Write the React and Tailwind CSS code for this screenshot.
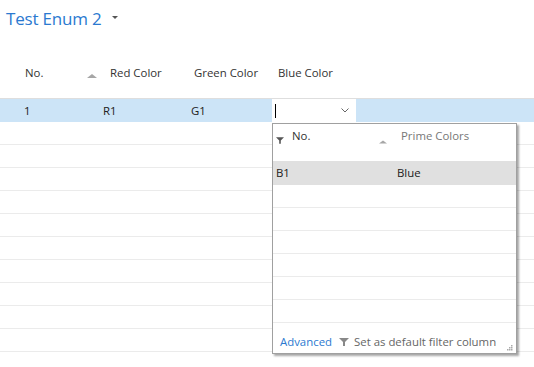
import React from "react";

const font = { fontFamily: '"Open Sans", "Noto Sans", sans-serif' };

function Funnel({ className }) {
  return (
    <svg className={className} viewBox="0 0 10 8" width="10" height="8">
      <path d="M0 0 H10 L6 4 V8 H4 V4 Z" fill="currentColor" />
    </svg>
  );
}

function SortUp({ className }) {
  return (
    <svg className={className} viewBox="0 0 10 4" width="10" height="4">
      <path d="M5 0 L10 4 H0 Z" fill="currentColor" />
    </svg>
  );
}

export default function App() {
  const rows = Array.from({ length: 10 });
  const popRows = Array.from({ length: 6 });
  return (
    <div
      className="relative w-[534px] h-[367px] overflow-hidden bg-white text-[11.4px] text-[#212121]"
      style={font}
    >
      {/* Title */}
      <div className="flex items-center h-[36px] pl-[6px]">
        <span className="text-[17px] text-[#2b79d0] leading-none tracking-[-0.2px]">Test Enum 2</span>
        <svg className="ml-[11px] mt-[-2px] text-[#555]" width="6" height="3" viewBox="0 0 6 3">
          <path d="M0 0 H6 L3 3 Z" fill="currentColor" />
        </svg>
      </div>

      {/* Header */}
      <div className="flex items-center h-[63px] pt-[12px] border-b border-[#dedede] text-[#333]">
        <div className="w-[110px] pl-[25px] flex items-center relative">
          <span>No.</span>
          <SortUp className="absolute left-[87px] top-[10px] text-[#a6a6a6]" />
        </div>
        <div className="w-[84px]">Red Color</div>
        <div className="w-[84px]">Green Color</div>
        <div className="">Blue Color</div>
      </div>

      {/* Selected row */}
      <div className="flex items-center h-[23px] bg-[#cce4f7]">
        <div className="w-[103px] pl-[24px]">1</div>
        <div className="w-[88px]">R1</div>
        <div className="w-[81px]">G1</div>
        <div className="w-[84px] h-[23px] bg-white flex items-center justify-between pl-[3px] pr-[7px]">
          <div className="w-px h-[14px] bg-black" />
          <svg width="8" height="5" viewBox="0 0 8 5" className="text-[#666]">
            <path d="M0.5 0.5 L4 4 L7.5 0.5" stroke="currentColor" fill="none" strokeWidth="1" />
          </svg>
        </div>
      </div>

      {/* Empty rows */}
      {rows.map((_, i) => (
        <div key={i} className="h-[23px] border-b border-[#ebebeb]" />
      ))}

      {/* Popup */}
      <div className="absolute left-[272px] top-[123px] w-[245px] h-[231px] border border-[#a0a0a0] bg-white shadow-[2px_2px_2px_rgba(0,0,0,0.35)] flex flex-col">
        <div className="h-[37px] shrink-0 relative">
          <Funnel className="absolute left-[3px] top-[13px] text-[#555] w-[8px] h-[7px]" />
          <span className="absolute left-[19px] top-[3px] text-[#333]">No.</span>
          <SortUp className="absolute left-[106px] top-[16px] w-[8px] h-[4px] text-[#a6a6a6]" />
          <span className="absolute left-[128px] top-[3px] text-[#777]">Prime Colors</span>
        </div>
        <div className="h-[24px] shrink-0 bg-[#e0e0e0] flex items-center">
          <div className="w-[124px] pl-[3px]">B1</div>
          <div>Blue</div>
        </div>
        {popRows.map((_, i) => (
          <div key={i} className="h-[23px] shrink-0 border-b border-[#ebebeb]" />
        ))}
        <div className="flex-1 relative flex items-center pl-[7px] pt-[8px]">
          <span className="text-[#2b79d0]">Advanced</span>
          <Funnel className="ml-[7px] text-[#888] w-[10px] h-[8px]" />
          <span className="ml-[5px] text-[#666]">Set as default filter column</span>
          <svg className="absolute right-[3px] bottom-[2px]" width="6" height="6" viewBox="0 0 6 6">
            <rect x="4" y="0" width="1.5" height="1.5" fill="#aaa" />
            <rect x="2" y="2" width="1.5" height="1.5" fill="#aaa" />
            <rect x="4" y="2" width="1.5" height="1.5" fill="#aaa" />
            <rect x="0" y="4" width="1.5" height="1.5" fill="#aaa" />
            <rect x="2" y="4" width="1.5" height="1.5" fill="#aaa" />
            <rect x="4" y="4" width="1.5" height="1.5" fill="#aaa" />
          </svg>
        </div>
      </div>
    </div>
  );
}
